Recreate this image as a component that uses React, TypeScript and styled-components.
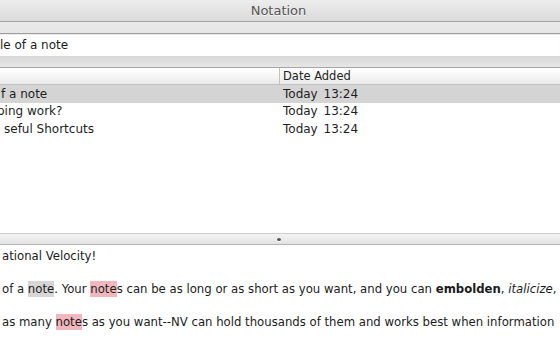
import React from "react";
import styled, { createGlobalStyle } from "styled-components";

const Global = createGlobalStyle`
  *, *::before, *::after { box-sizing: border-box; }
  html, body { margin: 0; padding: 0; background: #fff; overflow: hidden; }
  body { font-family: "DejaVu Sans", "Liberation Sans", sans-serif; }
`;

const Window = styled.div`
  width: 560px;
  height: 350px;
  display: flex;
  flex-direction: column;
  overflow: hidden;
  background: #fff;
`;

const TitleBar = styled.div`
  height: 22px;
  flex: none;
  display: flex;
  align-items: center;
  justify-content: center;
  padding-right: 3px;
  background: linear-gradient(#ededed, #dadada);
  border-bottom: 1px solid #a4a4a4;
  font-size: 13px;
  color: #555;
  text-shadow: 0 1px 0 rgba(255, 255, 255, 0.7);
`;

const Toolbar = styled.div`
  flex: none;
  display: flex;
  flex-direction: column;
  background: linear-gradient(#e9e9e9, #dedede);
  padding-top: 11px;
  border-bottom: 1px solid #a6a6a6;
`;

const SearchField = styled.div`
  height: 23px;
  display: flex;
  align-items: center;
  background: #fff;
  border-top: 1px solid #9c9c9c;
  font-size: 12px;
  color: #1c1c1c;
  white-space: nowrap;
  box-shadow: inset 0 1px 1px rgba(0, 0, 0, 0.08);
`;

const FieldGap = styled.div`
  height: 11px;
  background: linear-gradient(#d8d8d8, #e6e6e6);
`;

const ListHeader = styled.div`
  height: 17px;
  flex: none;
  display: grid;
  grid-template-columns: 279px 1fr;
  background: linear-gradient(#ffffff, #f4f4f4 60%, #e9e9e9);
  border-bottom: 1px solid #c4c4c4;
  font-size: 11.5px;
  color: #222;
`;

const HeaderCell = styled.div<{ $divider?: boolean }>`
  display: flex;
  align-items: center;
  padding-left: 3px;
  border-left: ${(p) => (p.$divider ? "1px solid #c2c2c2" : "none")};
`;

const List = styled.div`
  flex: 1;
  display: flex;
  flex-direction: column;
  background: #fff;
`;

const Row = styled.div<{ $selected?: boolean }>`
  height: 17.5px;
  display: grid;
  grid-template-columns: 280px 1fr;
  align-items: center;
  background: ${(p) => (p.$selected ? "#d4d4d4" : "transparent")};
  font-size: 12px;
  color: #1e1e1e;
  white-space: nowrap;
`;

const TitleCell = styled.div<{ $indent: number }>`
  overflow: hidden;
  text-indent: ${(p) => p.$indent}px;
`;

const DateCell = styled.div`
  padding-left: 3px;
  word-spacing: 2px;
`;

const Splitter = styled.div`
  height: 12px;
  flex: none;
  display: flex;
  align-items: center;
  justify-content: center;
  padding-right: 2px;
  background: linear-gradient(#f4f4f4, #e2e2e2);
  border-top: 1px solid #cdcdcd;
  border-bottom: 1px solid #b4b4b4;
`;

const Dimple = styled.div`
  width: 4px;
  height: 3px;
  border-radius: 50%;
  background: #555;
  box-shadow: 0 1px 0 rgba(255, 255, 255, 0.8);
`;

const NoteBody = styled.div`
  height: 105px;
  flex: none;
  padding: 3px 0 0 2px;
  font-size: 11.7px;
  line-height: 16.5px;
  color: #1c1c1c;
  white-space: nowrap;
  overflow: hidden;
`;

const Para = styled.div`
  margin-bottom: 16.5px;
`;

const Hit = styled.span<{ $kind: "selected" | "match" }>`
  background: ${(p) => (p.$kind === "selected" ? "#d6d6d6" : "#f1b7bd")};
  padding: 1px 0;
`;

const rows = [
  { title: "f a note", indent: 1, selected: true },
  { title: "ping work?", indent: -3, selected: false },
  { title: "seful Shortcuts", indent: 4, selected: false },
];

export default function App() {
  return (
    <>
      <Global />
      <Window>
        <TitleBar>Notation</TitleBar>
        <Toolbar>
          <SearchField>le of a note</SearchField>
          <FieldGap />
        </Toolbar>
        <ListHeader>
          <HeaderCell />
          <HeaderCell $divider>Date Added</HeaderCell>
        </ListHeader>
        <List>
          {rows.map((r) => (
            <Row key={r.title} $selected={r.selected}>
              <TitleCell $indent={r.indent}>{r.title}</TitleCell>
              <DateCell>Today 13:24</DateCell>
            </Row>
          ))}
        </List>
        <Splitter>
          <Dimple />
        </Splitter>
        <NoteBody>
          <Para>ational Velocity!</Para>
          <Para>
            of a <Hit $kind="selected">note</Hit>. Your <Hit $kind="match">note</Hit>s can be as long or
            as short as you want, and you can <b>embolden</b>, <i>italicize</i>,
          </Para>
          <Para>
            as many <Hit $kind="match">note</Hit>s as you want--NV can hold thousands of them and works
            best when information
          </Para>
        </NoteBody>
      </Window>
    </>
  );
}
